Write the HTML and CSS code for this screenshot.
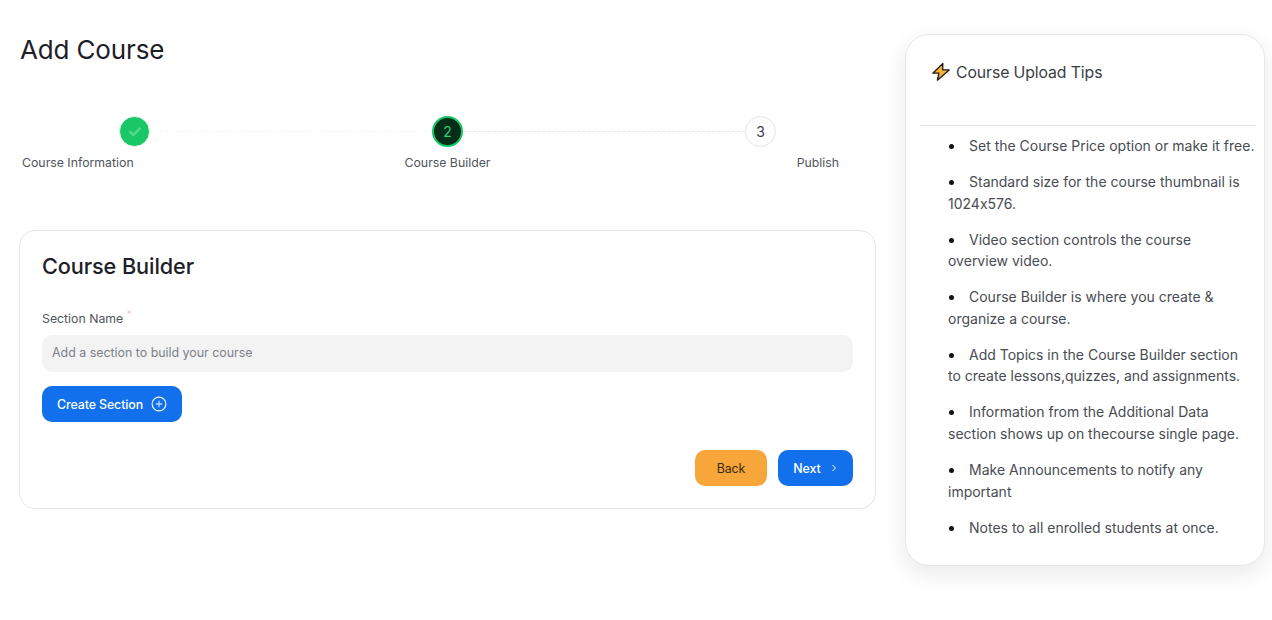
FILE: index.html
```html
<!DOCTYPE html>
<html lang="en">
<head>
<meta charset="utf-8">
<title>Add Course</title>
<link rel="stylesheet" href="styles.css">
</head>
<body>
<div class="page">
  <main class="main">
    <h1 class="title">Add Course</h1>
    <section class="stepper">
      <div class="track">
        <span class="dot done">
          <svg width="16" height="16" viewBox="0 0 16 16" fill="none"><path d="M2.5 8.2 6.4 12 13.5 4.6" stroke="#55d98a" stroke-width="2.4"/></svg>
        </span>
        <span class="line line-done"></span>
        <span class="dot current">2</span>
        <span class="line"></span>
        <span class="dot todo">3</span>
      </div>
      <div class="labels">
        <span>Course Information</span>
        <span>Course Builder</span>
        <span class="label-end">Publish</span>
      </div>
    </section>
    <section class="card">
      <h2 class="card-title">Course Builder</h2>
      <label class="field-label" for="section-name">Section Name <sup class="req">*</sup></label>
      <input class="field" id="section-name" type="text" placeholder="Add a section to build your course">
      <button class="btn btn-blue btn-create" type="button">Create Section
        <svg width="16" height="16" viewBox="0 0 16 16" fill="none" stroke="#fff"><circle cx="8" cy="8" r="6.9" stroke-width="1.1"/><path d="M8 4.8v6.4M4.8 8h6.4" stroke="#b9d4fb" stroke-width="1.3"/></svg>
      </button>
      <div class="actions">
        <button class="btn btn-orange" type="button">Back</button>
        <button class="btn btn-blue btn-next" type="button">Next
          <svg width="8" height="8" viewBox="0 0 8 8" fill="none"><path d="M2.5 1 5.5 4 2.5 7" stroke="#fff" stroke-width="1"/></svg>
        </button>
      </div>
    </section>
  </main>
  <aside class="tips">
    <h3 class="tips-title">
      <svg width="20" height="20" viewBox="0 0 20 20"><path d="M11.8 1.5 1.8 11.2h6.1L6.4 18.2 18.2 7.9h-6.5z" fill="#f8b133" stroke="#1b1b1b" stroke-width="1.3" stroke-linejoin="round"/></svg>
      Course Upload Tips
    </h3>
    <ul class="tips-list">
      <li>Set the Course Price option or make it free.</li>
      <li>Standard size for the course thumbnail is 1024x576.</li>
      <li>Video section controls the course<br>overview video.</li>
      <li>Course Builder is where you create &amp;<br>organize a course.</li>
      <li>Add Topics in the Course Builder section<br>to create lessons,quizzes, and assignments.</li>
      <li>Information from the Additional Data<br>section shows up on thecourse single page.</li>
      <li>Make Announcements to notify any<br>important</li>
      <li>Notes to all enrolled students at once.</li>
    </ul>
  </aside>
</div>
</body>
</html>
```
FILE: styles.css
```css
* { box-sizing: border-box; }
html, body { margin: 0; height: 100%; background: #fff; }
body { font-family: "Inter", "Noto Sans", sans-serif; font-feature-settings: "calt" 0; color: #1d2026; overflow: hidden; }
.page { display: flex; align-items: flex-start; gap: 29px; padding: 34px 8px 0 19px; }
.main { width: 857px; flex: none; padding-top: 1px; }
.title { margin: 0 0 0 1px; font-size: 26px; line-height: 30px; font-weight: 400; letter-spacing: -0.15px; }
.stepper { margin-top: 50px; }
.track { display: flex; align-items: center; padding: 0 100px; height: 32px; }
.dot { width: 31px; height: 31px; flex: none; border-radius: 50%; display: flex; align-items: center; justify-content: center; font-size: 14px; }
.done { background: #19c767; border: 1px solid #e6f7ec; }
.current { background: #062d18; color: #2fcf72; border: 2px solid #14c666; }
.todo { background: #fff; color: #3a4047; border: 1px solid #e4e4e7; }
.line { flex: 1; border-top: 1px dashed #e3e5e8; }
.line-done { border-top-color: #f5f9ee; }
.labels { display: grid; grid-template-columns: 1fr auto 1fr; padding: 0 3px; margin-top: 8px; font-size: 12.3px; line-height: 16px; color: #51555c; }
.label-end { justify-self: end; margin-right: 34px; }
.card { margin-top: 59px; height: 279px; border: 1px solid #e4e5e8; border-radius: 16px; padding: 22px 22px 0; }
.card-title { margin: 0; font-size: 21.7px; line-height: 26px; font-weight: 500; letter-spacing: -0.1px; }
.field-label { display: block; margin-top: 32px; font-size: 12.3px; line-height: 16px; color: #51555c; }
.req { color: #f8c3d8; font-size: 10px; line-height: 0; }
.field { display: block; width: 100%; height: 37px; margin-top: 8px; border: 0; border-radius: 10px; background: #f3f3f4; padding: 0 10px 2px; font: 12.4px "Inter", sans-serif; color: #333; }
.field::placeholder { color: #7c7f87; opacity: 1; }
.btn { display: inline-flex; align-items: center; justify-content: center; height: 36px; border: 0; border-radius: 10px; font: 500 12.4px "Inter", sans-serif; letter-spacing: -0.1px; }
.btn-blue { background: #1270ec; color: #fff; }
.btn-orange { background: #f7a63a; color: #3a2a12; width: 72px; font-weight: 400; }
.btn-create { width: 140px; margin-top: 14px; gap: 8px; }
.btn-next { width: 75px; gap: 9px; }
.actions { display: flex; justify-content: flex-end; gap: 11px; margin-top: 28px; }
.tips { width: 360px; height: 532px; flex: none; background: #fff; border: 1px solid #e8e8ea; border-radius: 24px; box-shadow: 0 8px 24px rgba(0,0,0,0.09); padding: 26px 8px 0 14px; }
.tips-title { display: flex; align-items: center; gap: 5px; margin: 0; padding: 0 0 0 11px; height: 22px; font-size: 15.8px; font-weight: 400; color: #3a3e45; letter-spacing: -0.1px; }
.tips-list { margin: 42px 0 0; padding: 9px 0 0 29px; border-top: 1px solid #dfe0e2; font-size: 14px; line-height: 21.5px; color: #484c53; list-style: disc; }
.tips-list li { margin: 0 0 14.6px -1px; text-indent: 1px; list-style-position: inside; }
.tips-list li::marker { color: #111; }
```
